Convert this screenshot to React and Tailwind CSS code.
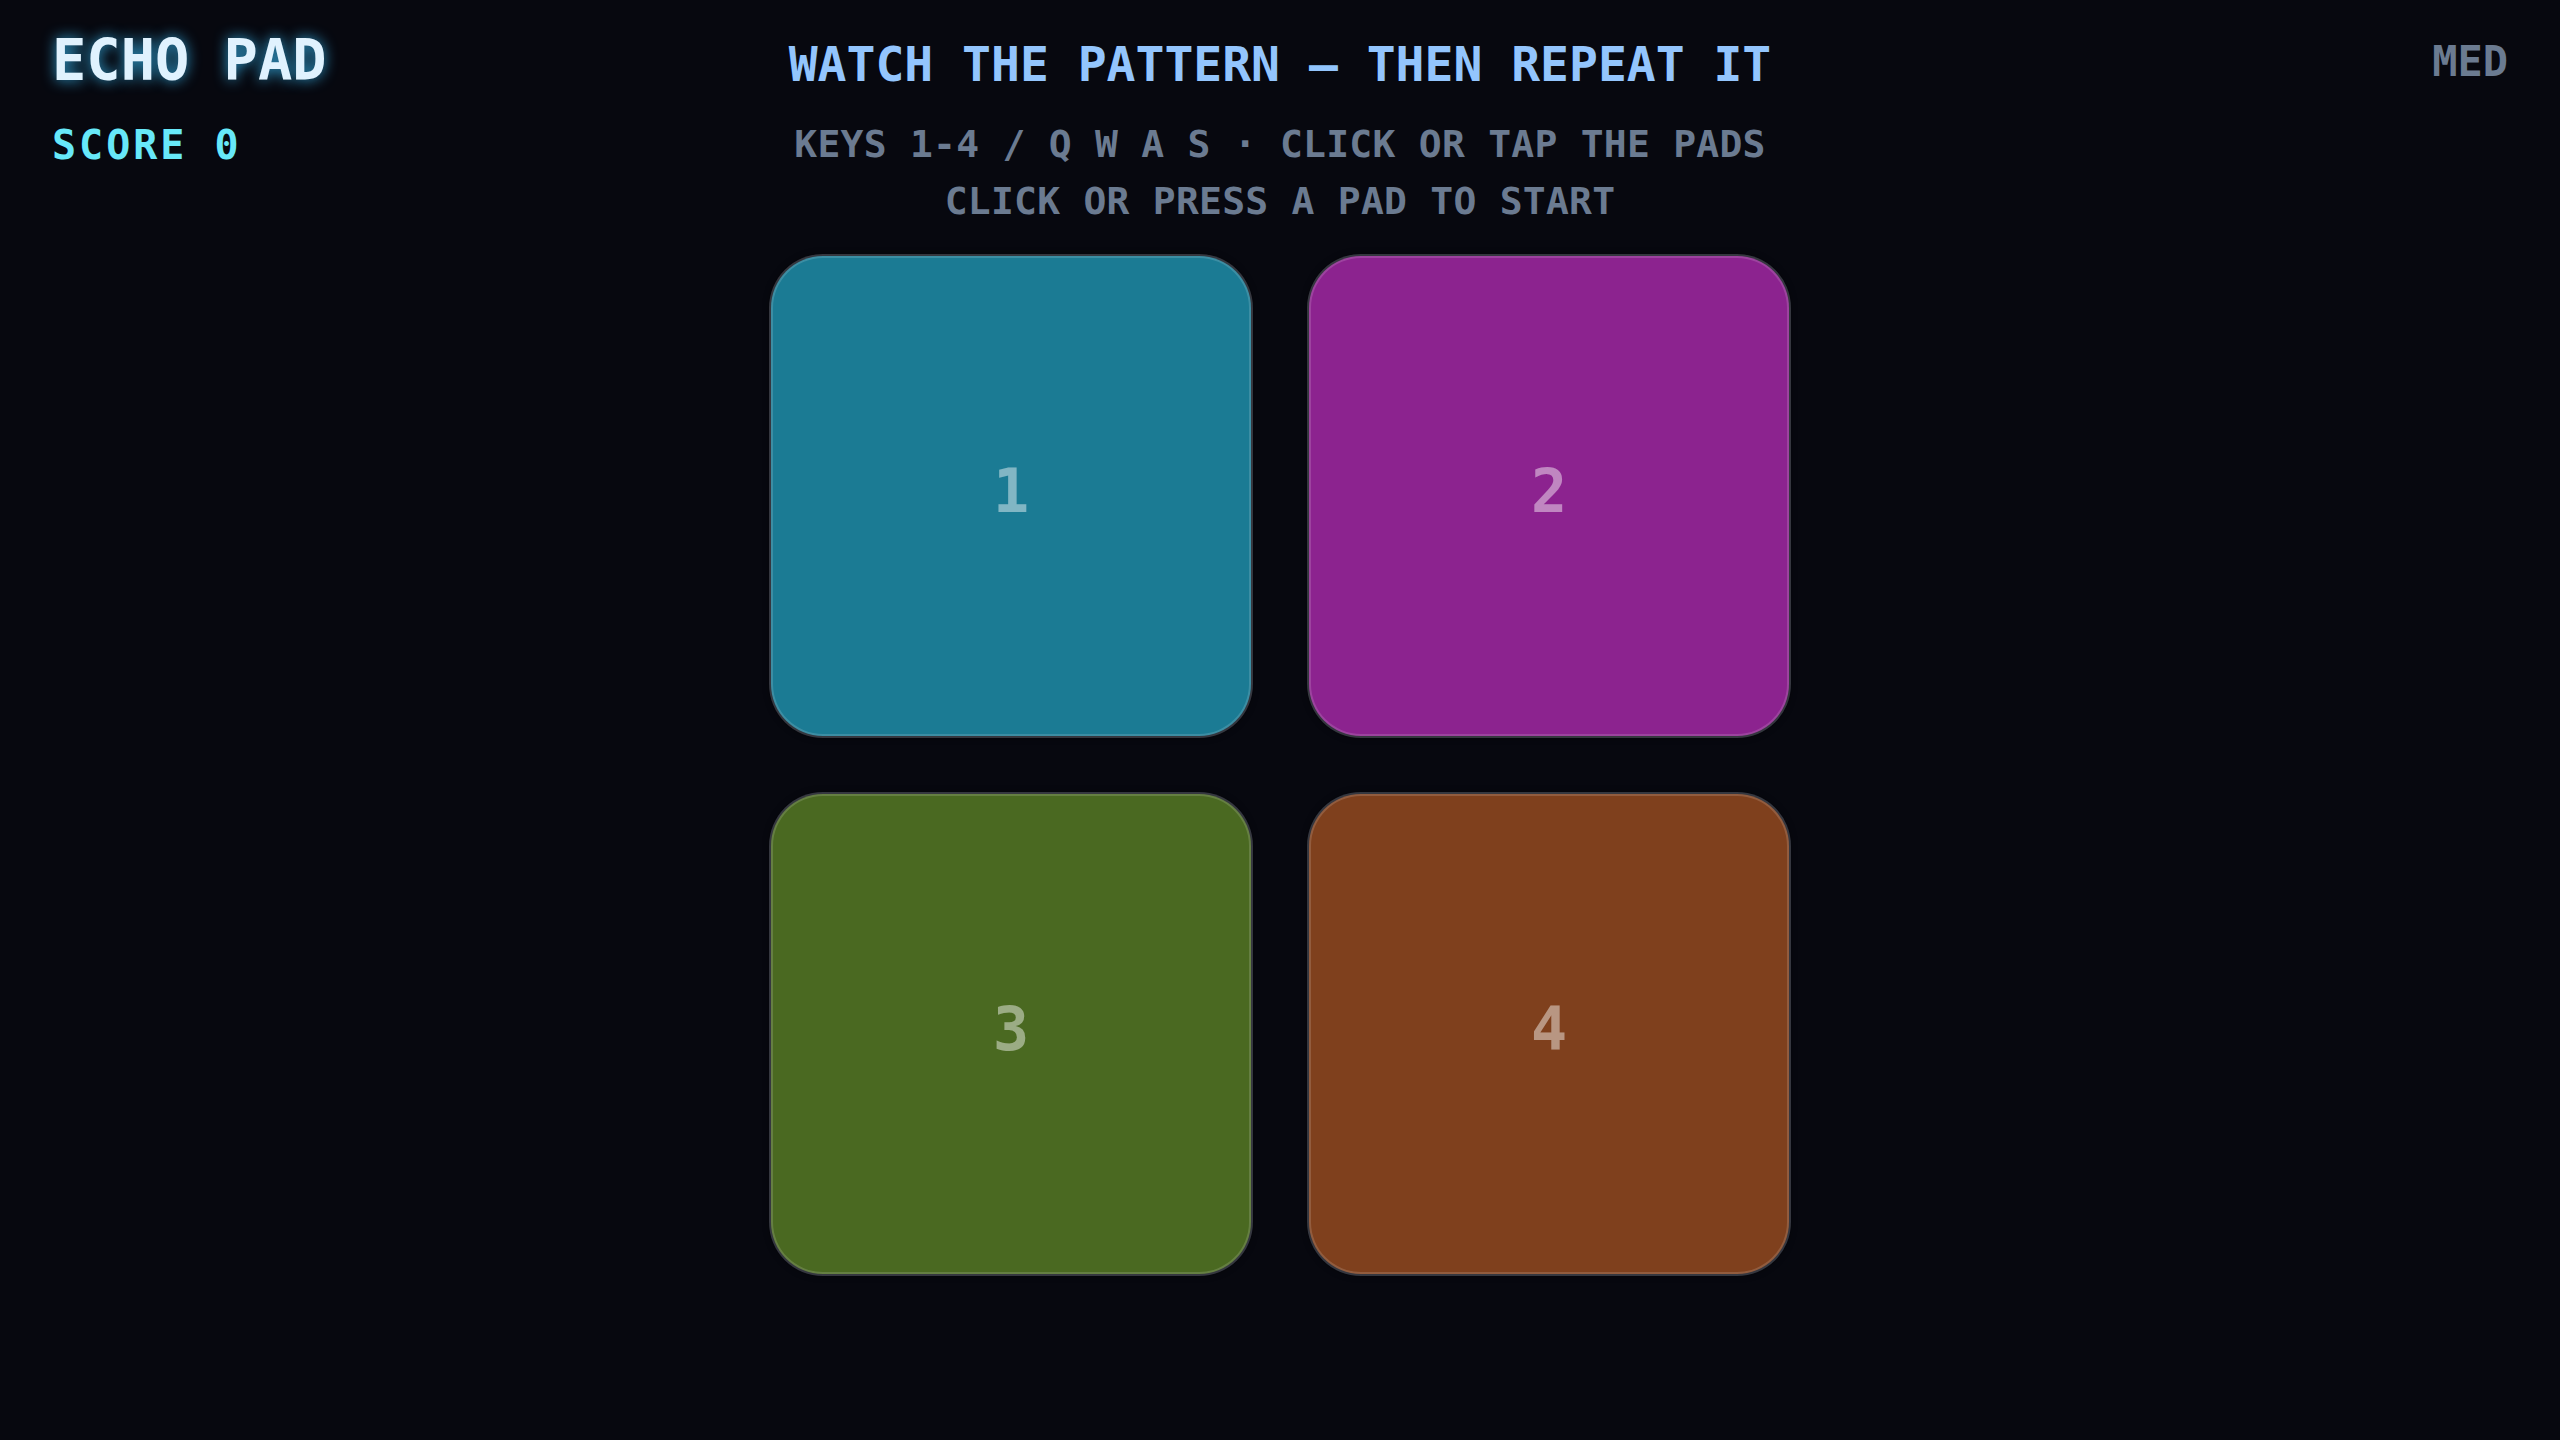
const pads = [
  { n: 1, bg: "bg-[#1b7b94]" },
  { n: 2, bg: "bg-[#8c238f]" },
  { n: 3, bg: "bg-[#4a6921]" },
  { n: 4, bg: "bg-[#7f401d]" },
];

function Pad({ n, bg }) {
  return (
    <button
      className={`${bg} flex h-[480px] w-[480px] items-center justify-center rounded-[52px] border-2 border-white/15 pb-[10px] text-[60px] font-bold leading-none text-white/45 shadow-[0_0_0_2px_rgba(70,72,82,0.75),0_0_6px_2px_rgba(0,0,0,0.4)]`}
    >
      {n}
    </button>
  );
}

export default function App() {
  return (
    <div className="min-h-screen bg-[#07080f] font-['DejaVu_Sans_Mono',monospace] font-bold">
      <div className="grid grid-cols-[1fr_auto_1fr] items-start pl-[52px] pr-[52px] pt-8">
        <div>
          <h1 className="text-[57px] leading-none text-[#e0f2fe] [text-shadow:0_0_14px_rgba(56,189,248,0.85)]">
            ECHO PAD
          </h1>
          <p className="mt-9 text-[40px] leading-none tracking-[3px] text-[#67e8f9]">
            SCORE 0
          </p>
        </div>

        <div className="flex flex-col items-center pt-2 text-center">
          <h2 className="text-[48px] leading-none text-[#93c5fd]">
            WATCH THE PATTERN — THEN REPEAT IT
          </h2>
          <p className="mt-7 text-[38px] leading-[57px] tracking-[0.25px] text-[#6b7b91]">
            KEYS 1-4 / Q W A S · CLICK OR TAP THE PADS
          </p>
          <p className="text-[38px] leading-[57px] tracking-[0.25px] text-[#6b7b91]">
            CLICK OR PRESS A PAD TO START
          </p>
        </div>

        <div className="flex justify-end pt-[9px]">
          <span className="text-[42px] leading-none text-[#6b7b91]">MED</span>
        </div>
      </div>

      <div className="mt-[26px] flex justify-center">
        <div className="grid grid-cols-2 gap-[58px]">
          {pads.map((p) => (
            <Pad key={p.n} n={p.n} bg={p.bg} />
          ))}
        </div>
      </div>
    </div>
  );
}
